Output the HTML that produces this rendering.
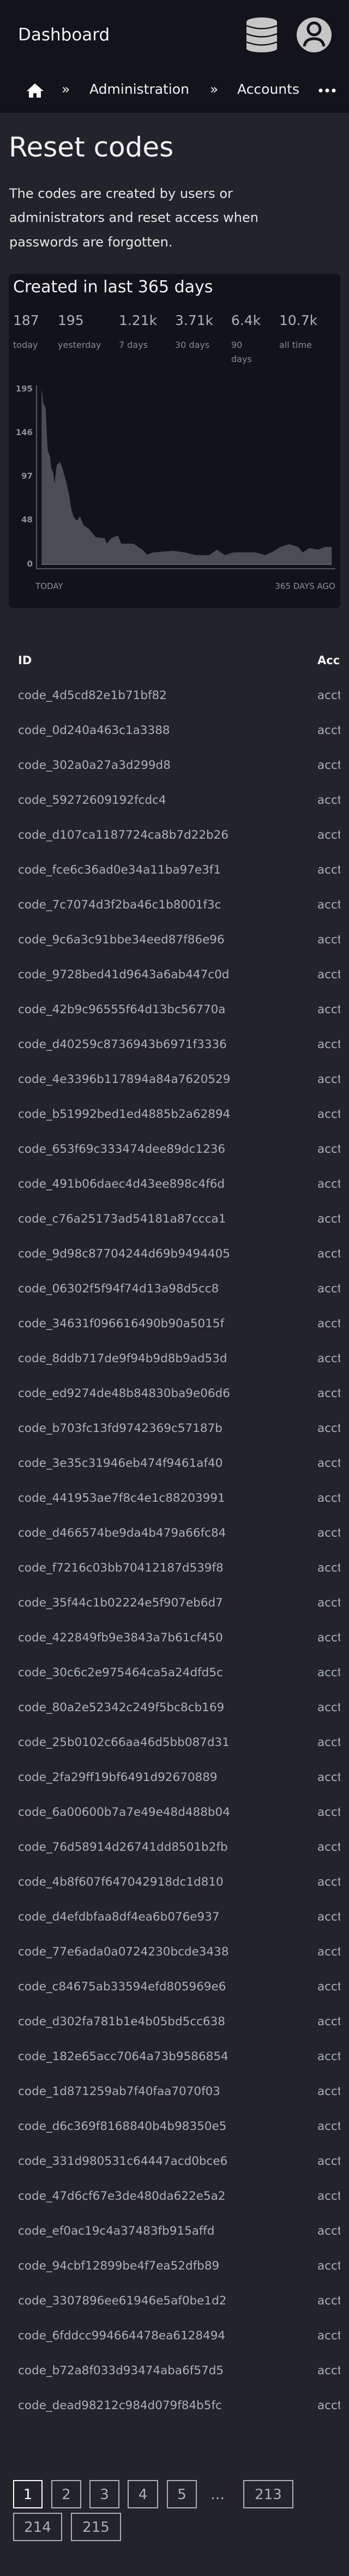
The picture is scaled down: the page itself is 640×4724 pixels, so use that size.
<!DOCTYPE html>
<html><head><meta charset="utf-8"><style>
html,body{margin:0;padding:0;background:#22232b;}
svg{display:block;}
text{font-family:"DejaVu Sans","Liberation Sans",sans-serif;}
</style></head><body>
<svg width="640" height="4724" viewBox="0 0 640 4724" xmlns="http://www.w3.org/2000/svg">
<defs><clipPath id="cl"><rect x="0" y="0" width="624" height="4724"/></clipPath></defs>
<rect x="0" y="0" width="640" height="4724" fill="#22232b"/>
<rect x="0" y="0" width="640" height="207" fill="#12131b"/>
<text x="33" y="74" font-size="31" fill="#f2f2f2">Dashboard</text>
<!-- db icon -->
<g fill="#c6c6c6">
<rect x="452" y="38" width="56" height="54" rx="4"/>
<ellipse cx="480" cy="40" rx="28" ry="8"/>
<ellipse cx="480" cy="89" rx="28" ry="7"/>
</g>
<g fill="none" stroke="#12131b" stroke-width="2.5">
<path d="M452 47 Q480 58 508 47"/>
<path d="M452 62 Q480 73 508 62"/>
<path d="M452 77 Q480 88 508 77"/>
</g>
<!-- user icon -->
<ellipse cx="576" cy="64" rx="32" ry="32" fill="#c6c6c6"/>
<circle cx="576" cy="53" r="11" fill="none" stroke="#12131b" stroke-width="5"/>
<path d="M558 85 Q560 71 576 71 Q592 71 594 85" fill="none" stroke="#12131b" stroke-width="5"/>
<!-- breadcrumb -->
<path d="M64 153 L49 167 L53 167 L53 179 L61 179 L61 171 L67 171 L67 179 L75 179 L75 167 L80 167 Z" fill="#fff"/>
<text x="113" y="172" font-size="25" fill="#f2f2f2">»</text>
<text x="164" y="172" font-size="25" fill="#f2f2f2">Administration</text>
<text x="385" y="172" font-size="25" fill="#f2f2f2">»</text>
<text x="435" y="172" font-size="25" fill="#f2f2f2">Accounts</text>
<circle cx="588" cy="166" r="3.5" fill="#fff"/><circle cx="600" cy="166" r="3.5" fill="#fff"/><circle cx="612" cy="166" r="3.5" fill="#fff"/>
<!-- title -->
<text x="16" y="287" font-size="50" fill="#f2f2f2">Reset codes</text>
<g font-size="24" fill="#e6e6e6">
<text x="17" y="363">The codes are created by users or</text>
<text x="17" y="407">administrators and reset access when</text>
<text x="17" y="452">passwords are forgotten.</text>
</g>
<!-- card -->
<rect x="16" y="502" width="608" height="613" rx="8" fill="#11121a"/>
<text x="24" y="536" font-size="30" fill="#f2f2f2">Created in last 365 days</text>
<g font-size="25" fill="#aab2bf">
<text x="24" y="596">187</text><text x="106" y="596">195</text><text x="218" y="596">1.21k</text>
<text x="321" y="596">3.71k</text><text x="424" y="596">6.4k</text><text x="512" y="596">10.7k</text>
</g>
<g font-size="16" fill="#858b96">
<text x="24" y="638">today</text><text x="106" y="638">yesterday</text><text x="218" y="638">7 days</text>
<text x="321" y="638">30 days</text><text x="424" y="638">90</text><text x="424" y="664">days</text><text x="512" y="638">all time</text>
</g>
<!-- chart -->
<g font-size="15" font-weight="bold" fill="#8a8f99" text-anchor="end">
<text x="60" y="718">195</text><text x="60" y="798">146</text><text x="60" y="878">97</text><text x="60" y="958">48</text><text x="60" y="1039">0</text>
</g>
<polygon fill="#4a4d55" points="76.3,713 79.6,740 83.7,748 85.7,795 87.8,827 91.8,837 93.9,858 98,868 100,887 104.1,853 110.2,847 114.3,858 118.4,873 122.4,888 126.5,907 130.6,933 134.7,947 140.8,955 146.9,947 153.1,963 163.3,970 175.5,985 191.8,987 195.9,997 204.1,987 216.3,982 222.4,997 244.9,997 253.1,1003 261.2,1008 269.4,1017 281.6,1013 318.4,1010 338.8,1013 359.2,1018 383.7,1018 398,1008 412.2,1018 428.6,1013 469.4,1013 485.7,1018 498,1013 514.3,1003 530.6,998 546.9,1003 555.1,1013 567.3,1005 583.7,1008 595.9,1003 608.2,1003 608.2,1035 76.3,1035"/>
<line x1="76" y1="1035" x2="608" y2="1035" stroke="#8a8f99" stroke-width="1"/>
<path d="M67 707 V1043 H615" fill="none" stroke="#6b7079" stroke-width="1.5"/>
<text x="65" y="1080" font-size="15" fill="#8a8f99">TODAY</text>
<text x="615" y="1080" font-size="15" fill="#8a8f99" text-anchor="end">365 DAYS AGO</text>
<!-- table -->
<g clip-path="url(#cl)">
<text x="33" y="1218" font-size="21" font-weight="bold" fill="#f2f2f2">ID</text>
<text x="582" y="1218" font-size="21" font-weight="bold" fill="#f2f2f2">Account</text>
<g font-size="21.5" fill="#a9b1bd">
<text x="33" y="1282">code_4d5cd82e1b71bf82</text><text x="582" y="1282">acct_1</text>
<text x="33" y="1346">code_0d240a463c1a3388</text><text x="582" y="1346">acct_2</text>
<text x="33" y="1410">code_302a0a27a3d299d8</text><text x="582" y="1410">acct_3</text>
<text x="33" y="1474">code_59272609192fcdc4</text><text x="582" y="1474">acct_4</text>
<text x="33" y="1538">code_d107ca1187724ca8b7d22b26</text><text x="582" y="1538">acct_5</text>
<text x="33" y="1602">code_fce6c36ad0e34a11ba97e3f1</text><text x="582" y="1602">acct_6</text>
<text x="33" y="1666">code_7c7074d3f2ba46c1b8001f3c</text><text x="582" y="1666">acct_7</text>
<text x="33" y="1730">code_9c6a3c91bbe34eed87f86e96</text><text x="582" y="1730">acct_8</text>
<text x="33" y="1794">code_9728bed41d9643a6ab447c0d</text><text x="582" y="1794">acct_9</text>
<text x="33" y="1858">code_42b9c96555f64d13bc56770a</text><text x="582" y="1858">acct_10</text>
<text x="33" y="1922">code_d40259c8736943b6971f3336</text><text x="582" y="1922">acct_11</text>
<text x="33" y="1986">code_4e3396b117894a84a7620529</text><text x="582" y="1986">acct_12</text>
<text x="33" y="2050">code_b51992bed1ed4885b2a62894</text><text x="582" y="2050">acct_13</text>
<text x="33" y="2114">code_653f69c333474dee89dc1236</text><text x="582" y="2114">acct_14</text>
<text x="33" y="2178">code_491b06daec4d43ee898c4f6d</text><text x="582" y="2178">acct_15</text>
<text x="33" y="2242">code_c76a25173ad54181a87ccca1</text><text x="582" y="2242">acct_16</text>
<text x="33" y="2306">code_9d98c87704244d69b9494405</text><text x="582" y="2306">acct_17</text>
<text x="33" y="2370">code_06302f5f94f74d13a98d5cc8</text><text x="582" y="2370">acct_18</text>
<text x="33" y="2434">code_34631f096616490b90a5015f</text><text x="582" y="2434">acct_19</text>
<text x="33" y="2498">code_8ddb717de9f94b9d8b9ad53d</text><text x="582" y="2498">acct_20</text>
<text x="33" y="2562">code_ed9274de48b84830ba9e06d6</text><text x="582" y="2562">acct_21</text>
<text x="33" y="2626">code_b703fc13fd9742369c57187b</text><text x="582" y="2626">acct_22</text>
<text x="33" y="2690">code_3e35c31946eb474f9461af40</text><text x="582" y="2690">acct_23</text>
<text x="33" y="2754">code_441953ae7f8c4e1c88203991</text><text x="582" y="2754">acct_24</text>
<text x="33" y="2818">code_d466574be9da4b479a66fc84</text><text x="582" y="2818">acct_25</text>
<text x="33" y="2882">code_f7216c03bb70412187d539f8</text><text x="582" y="2882">acct_26</text>
<text x="33" y="2946">code_35f44c1b02224e5f907eb6d7</text><text x="582" y="2946">acct_27</text>
<text x="33" y="3010">code_422849fb9e3843a7b61cf450</text><text x="582" y="3010">acct_28</text>
<text x="33" y="3074">code_30c6c2e975464ca5a24dfd5c</text><text x="582" y="3074">acct_29</text>
<text x="33" y="3138">code_80a2e52342c249f5bc8cb169</text><text x="582" y="3138">acct_30</text>
<text x="33" y="3202">code_25b0102c66aa46d5bb087d31</text><text x="582" y="3202">acct_31</text>
<text x="33" y="3266">code_2fa29ff19bf6491d92670889</text><text x="582" y="3266">acct_32</text>
<text x="33" y="3330">code_6a00600b7a7e49e48d488b04</text><text x="582" y="3330">acct_33</text>
<text x="33" y="3394">code_76d58914d26741dd8501b2fb</text><text x="582" y="3394">acct_34</text>
<text x="33" y="3458">code_4b8f607f647042918dc1d810</text><text x="582" y="3458">acct_35</text>
<text x="33" y="3522">code_d4efdbfaa8df4ea6b076e937</text><text x="582" y="3522">acct_36</text>
<text x="33" y="3586">code_77e6ada0a0724230bcde3438</text><text x="582" y="3586">acct_37</text>
<text x="33" y="3650">code_c84675ab33594efd805969e6</text><text x="582" y="3650">acct_38</text>
<text x="33" y="3714">code_d302fa781b1e4b05bd5cc638</text><text x="582" y="3714">acct_39</text>
<text x="33" y="3778">code_182e65acc7064a73b9586854</text><text x="582" y="3778">acct_40</text>
<text x="33" y="3842">code_1d871259ab7f40faa7070f03</text><text x="582" y="3842">acct_41</text>
<text x="33" y="3906">code_d6c369f8168840b4b98350e5</text><text x="582" y="3906">acct_42</text>
<text x="33" y="3970">code_331d980531c64447acd0bce6</text><text x="582" y="3970">acct_43</text>
<text x="33" y="4034">code_47d6cf67e3de480da622e5a2</text><text x="582" y="4034">acct_44</text>
<text x="33" y="4098">code_ef0ac19c4a37483fb915affd</text><text x="582" y="4098">acct_45</text>
<text x="33" y="4162">code_94cbf12899be4f7ea52dfb89</text><text x="582" y="4162">acct_46</text>
<text x="33" y="4226">code_3307896ee61946e5af0be1d2</text><text x="582" y="4226">acct_47</text>
<text x="33" y="4290">code_6fddcc994664478ea6128494</text><text x="582" y="4290">acct_48</text>
<text x="33" y="4354">code_b72a8f033d93474aba6f57d5</text><text x="582" y="4354">acct_49</text>
<text x="33" y="4418">code_dead98212c984d079f84b5fc</text><text x="582" y="4418">acct_50</text>
</g>
</g>
<!-- pagination -->
<g fill="none" stroke-width="2">
<rect x="25" y="4549" width="52" height="50" stroke="#ffffff"/>
<rect x="95" y="4549" width="53" height="50" stroke="#a9b1bd"/>
<rect x="165" y="4549" width="53" height="50" stroke="#a9b1bd"/>
<rect x="235" y="4549" width="54" height="50" stroke="#a9b1bd"/>
<rect x="307" y="4549" width="53" height="50" stroke="#a9b1bd"/>
<rect x="447" y="4549" width="90" height="50" stroke="#a9b1bd"/>
<rect x="25" y="4609" width="88" height="50" stroke="#a9b1bd"/>
<rect x="131" y="4609" width="90" height="50" stroke="#a9b1bd"/>
</g>
<g font-size="26" fill="#a9b1bd" text-anchor="middle">
<text x="51" y="4583" fill="#ffffff">1</text>
<text x="121.5" y="4583">2</text>
<text x="191.5" y="4583">3</text>
<text x="262" y="4583">4</text>
<text x="333.5" y="4583">5</text>
<text x="399" y="4583">…</text>
<text x="492" y="4583">213</text>
<text x="69" y="4643">214</text>
<text x="176" y="4643">215</text>
</g>
</svg>
</body></html>
